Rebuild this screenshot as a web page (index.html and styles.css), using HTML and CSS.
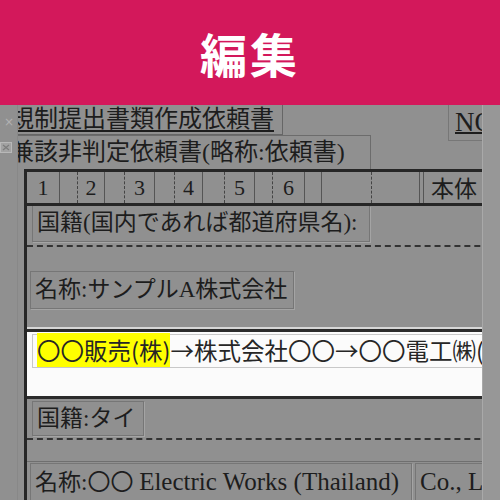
FILE: index.html
```html
<!DOCTYPE html>
<html lang="ja">
<head>
    <meta charset="UTF-8">
    <meta name="viewport" content="width=device-width, initial-scale=1.0">
    <title>編集</title>
    <link rel="stylesheet" href="styles.css">
</head>
<body>

    <header class="title-bar">編集</header>

    <div class="workspace">
        <div class="gutter">
            <span class="close-mark">×</span>
            <svg class="gutter-icon" width="12" height="11" viewBox="0 0 12 11">
                <rect x="0.5" y="0.5" width="11" height="10" fill="#a2a2a2" stroke="#b8b8b8"/>
                <path d="M3 3 L9 8 M9 3 L3 8" stroke="#7c7c7c" stroke-width="1.2"/>
            </svg>
        </div>

        <div class="viewport">
            <div class="sheet">
                <div class="head-row">
                    <div class="doc-title">規制提出書類作成依頼書</div>
                    <div class="doc-no">NO</div>
                </div>
                <div class="doc-sub">兼該非判定依頼書(略称:依頼書)</div>

                <div class="form-table">
                    <div class="num-row">
                        <span class="num">1</span><span class="pad"></span>
                        <span class="num">2</span><span class="pad"></span>
                        <span class="num">3</span><span class="pad"></span>
                        <span class="num">4</span><span class="pad"></span>
                        <span class="num">5</span><span class="pad"></span>
                        <span class="num">6</span><span class="num"></span>
                        <span class="pad"></span><span class="num"></span>
                        <span class="main-label">本体</span>
                    </div>

                    <div class="section nat">
                        <div class="field">国籍(国内であれば都道府県名):</div>
                    </div>

                    <div class="section name">
                        <div class="field">名称:サンプルA株式会社</div>
                    </div>

                    <div class="history">
                        <div class="history-line"><mark>〇〇販売(株)</mark>→株式会社〇〇→〇〇電工㈱(</div>
                    </div>

                    <div class="section tai">
                        <div class="field">国籍:タイ</div>
                    </div>

                    <div class="section name-en">
                        <div class="field">名称:〇〇 <span class="latin">Electric Works (Thailand)</span></div>
                        <div class="field field-rest"><span class="latin">Co., Ltd.</span></div>
                    </div>
                </div>
            </div>
        </div>

        <div class="rail"></div>
    </div>

</body>
</html>
```

FILE: styles.css
```css
html, body { margin: 0; }
body { width: 500px; height: 500px; overflow: hidden; background-color: #909090; font-family: "Noto Sans CJK JP", sans-serif; }

.title-bar { height: 105px; background-color: #d3185b; color: #fff; display: flex; align-items: center; justify-content: center; font-size: 47px; font-weight: 700; letter-spacing: 3px; }

.workspace { display: flex; height: 395px; }
.gutter { width: 18px; flex: none; box-sizing: border-box; border-right: 1px solid #888; display: flex; flex-direction: column; align-items: flex-start; padding-top: 10px; gap: 13px; }
.close-mark { color: #b2b2b2; font: 12px/14px "DejaVu Sans", sans-serif; margin-left: 4px; }
.gutter-icon { display: block; }
.viewport { flex: 1; overflow: hidden; }
.rail { width: 18px; flex: none; box-sizing: border-box; background-color: #979797; border-left: 1px solid #a9a9a9; }

.sheet { margin-left: -8px; width: 520px; color: #1d1d1d; font-family: "Liberation Serif", "Noto Sans CJK JP", serif; }

.head-row { display: flex; align-items: flex-start; height: 30px; }
.doc-title { height: 30px; box-sizing: border-box; font-size: 24px; line-height: 28px; padding-right: 8px; border-right: 1px solid #666; border-bottom: 1px solid #666; text-decoration: underline; text-decoration-thickness: 2px; text-underline-offset: 3px; }
.doc-no { margin-left: auto; width: 82px; height: 36px; box-sizing: border-box; padding-left: 6px; font-size: 27px; line-height: 34px; border-left: 1px solid #777; border-bottom: 1px solid #777; text-decoration: underline; text-decoration-thickness: 2px; }
.doc-sub { width: max-content; height: 34px; box-sizing: border-box; font-size: 24px; line-height: 33px; padding-right: 25px; border-top: 1px solid #6c6c6c; border-right: 1px solid #6c6c6c; }

.form-table { margin-left: 14px; border-top: 3px solid #262626; border-left: 3px solid #262626; }

.num-row { display: grid; grid-template-columns: 33px 18px 27px 20px 30px 20px 28px 22px 30px 18px 32px 17px 50px 48px 1fr; height: 31px; border-bottom: 3px solid #262626; }
.num-row span { box-sizing: border-box; font-size: 22px; line-height: 31px; text-align: center; border-right: 1px solid #555; }
.num-row .pad { border-right: 1px dashed #444; }
.num-row .main-label { border-right: none; border-left: 1px solid #555; margin-left: 3px; text-align: left; padding-left: 7px; font-family: "Noto Sans CJK JP", sans-serif; font-size: 23px; }

.field { width: max-content; box-sizing: border-box; font-size: 23px; border: 1px solid #767676; box-shadow: 1px 1px 0 #a4a4a4; padding: 0 12px 0 4px; white-space: nowrap; }
.latin { font-size: 25px; }

.nat { padding: 0 0 3px 5px; border-bottom: 2px dashed #333; }
.nat .field { height: 36px; line-height: 34px; border-top: none; }
.name { padding: 24px 0 20px 3px; }
.name .field { height: 38px; line-height: 36px; padding-right: 6px; }

.history { height: 64px; background-color: #fbfbfb; border-top: 3px solid #2b2b2b; border-bottom: 3px solid #2b2b2b; box-shadow: 0 -2px 0 #d6d6d6; }
.history-line { margin: 2px 0 0 5px; height: 34px; box-sizing: border-box; border: 1px solid #c8c8c8; border-right: none; padding-left: 4px; font-family: "Noto Sans CJK JP", sans-serif; font-size: 23.5px; line-height: 31px; white-space: nowrap; color: #262626; }
.history-line mark { background-color: #ffff00; color: #262626; }

.tai { padding: 2px 0 2px 5px; border-bottom: 2px dashed #333; margin-bottom: 21px; }
.tai .field { height: 35px; line-height: 33px; padding-right: 8px; }

.name-en { display: flex; gap: 3px; padding: 1px 0 0 3px; border-top: 1px solid #6f6f6f; }
.name-en .field { height: 40px; line-height: 36px; border-bottom: none; padding-right: 12px; }
.name-en .field-rest { padding-left: 4px; }
```
